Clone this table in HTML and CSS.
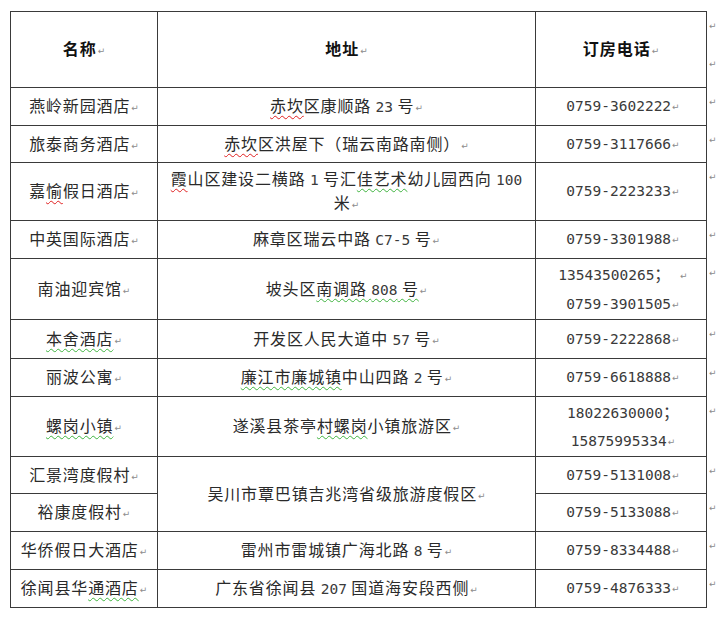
FILE: index.html
```html
<!DOCTYPE html>
<html lang="zh-CN">
<head>
<meta charset="utf-8">
<title>酒店订房电话</title>
<link rel="stylesheet" href="styles.css">
</head>
<body>
<table class="hotels">
  <colgroup>
    <col class="c-name">
    <col class="c-addr">
    <col class="c-tel">
    <col class="c-end">
  </colgroup>
  <tr class="h76 head">
    <th>名称<span class="pm">↵</span></th>
    <th>地址<span class="pm">↵</span></th>
    <th>订房电话<span class="pm">↵</span></th>
    <td class="end"><span class="em">↵</span><span class="em em2">↵</span></td>
  </tr>
  <tr class="h38">
    <td>燕岭新园酒店<span class="pm">↵</span></td>
    <td><span class="sp-red">赤坎</span>区康顺路 <span class="num">23</span> 号<span class="pm">↵</span></td>
    <td class="tel">0759-3602222<span class="pm">↵</span></td>
    <td class="end"><span class="em">↵</span></td>
  </tr>
  <tr class="h37">
    <td>旅泰商务酒店<span class="pm">↵</span></td>
    <td><span class="sp-red">赤坎</span>区洪屋下（瑞云南路南侧）<span class="pm">↵</span></td>
    <td class="tel">0759-3117666<span class="pm">↵</span></td>
    <td class="end"><span class="em">↵</span></td>
  </tr>
  <tr class="h58">
    <td>嘉<span class="sp-red">愉</span>假日酒店<span class="pm">↵</span></td>
    <td class="two32"><span class="sp-red">霞</span>山区建设二横路 <span class="num">1</span> 号汇<span class="sp-green">佳艺术</span>幼儿园西向 <span class="num">100</span><br>米<span class="pm">↵</span></td>
    <td class="tel">0759-2223233<span class="pm">↵</span></td>
    <td class="end"><span class="em">↵</span></td>
  </tr>
  <tr class="h38">
    <td>中英国际酒店<span class="pm">↵</span></td>
    <td>麻章区瑞云中路 <span class="num">C7-5</span> 号<span class="pm">↵</span></td>
    <td class="tel">0759-3301988<span class="pm">↵</span></td>
    <td class="end"><span class="em">↵</span></td>
  </tr>
  <tr class="h58">
    <td>南油迎宾馆<span class="pm">↵</span></td>
    <td>坡头区<span class="sp-green">南调路 <span class="num">808</span> 号</span><span class="pm">↵</span></td>
    <td class="tel two28">13543500265<span class="cjk">；</span> <span class="pm">↵</span><br>0759-3901505<span class="pm">↵</span></td>
    <td class="end"><span class="em">↵</span></td>
  </tr>
  <tr class="h39">
    <td><span class="sp-green">本舍酒店</span><span class="pm">↵</span></td>
    <td>开发区人民大道中 <span class="num">57</span> 号<span class="pm">↵</span></td>
    <td class="tel">0759-2222868<span class="pm">↵</span></td>
    <td class="end"><span class="em">↵</span></td>
  </tr>
  <tr class="h38">
    <td>丽波公寓<span class="pm">↵</span></td>
    <td><span class="sp-green">廉江市廉城镇</span>中山四路 <span class="num">2</span> 号<span class="pm">↵</span></td>
    <td class="tel">0759-6618888<span class="pm">↵</span></td>
    <td class="end"><span class="em">↵</span></td>
  </tr>
  <tr class="h59">
    <td><span class="sp-green">螺岗小镇</span><span class="pm">↵</span></td>
    <td>遂溪县茶亭<span class="sp-green">村螺岗</span>小镇旅游区<span class="pm">↵</span></td>
    <td class="tel two28">18022630000<span class="cjk">；</span><br>15875995334<span class="pm">↵</span></td>
    <td class="end"><span class="em">↵</span></td>
  </tr>
  <tr class="h37">
    <td>汇景湾度假村<span class="pm">↵</span></td>
    <td rowspan="2">吴川市覃巴镇吉兆湾省级旅游度假区<span class="pm">↵</span></td>
    <td class="tel">0759-5131008<span class="pm">↵</span></td>
    <td class="end"><span class="em">↵</span></td>
  </tr>
  <tr class="h38">
    <td>裕康度假村<span class="pm">↵</span></td>
    <td class="tel">0759-5133088<span class="pm">↵</span></td>
    <td class="end"><span class="em">↵</span></td>
  </tr>
  <tr class="h38">
    <td>华侨假日大酒店<span class="pm">↵</span></td>
    <td>雷州市雷城镇广海北路 <span class="num">8</span> 号<span class="pm">↵</span></td>
    <td class="tel">0759-8334488<span class="pm">↵</span></td>
    <td class="end"><span class="em">↵</span></td>
  </tr>
  <tr class="h38">
    <td>徐闻县华<span class="sp-green">通酒店</span><span class="pm">↵</span></td>
    <td>广东省徐闻县 <span class="num">207</span> 国道海安段西侧<span class="pm">↵</span></td>
    <td class="tel">0759-4876333<span class="pm">↵</span></td>
    <td class="end"><span class="em">↵</span></td>
  </tr>
</table>
</body>
</html>
```

FILE: styles.css
```css
html, body {
  margin: 0;
  padding: 0;
  background: #ffffff;
}

body {
  font-family: "Noto Sans CJK SC", "Noto Sans", sans-serif;
  font-size: 16px;
  color: #2a2a2a;
}

.hotels {
  border-collapse: collapse;
  table-layout: fixed;
  width: 711px;
  margin: 11px 0 0 10px;
}

.c-name { width: 147px; }
.c-addr { width: 378px; }
.c-tel  { width: 171px; }
.c-end  { width: 15px; }

.hotels th,
.hotels td {
  border: 1px solid #3a3a3a;
  padding: 0 4px;
  text-align: center;
  vertical-align: middle;
  letter-spacing: 0.85px;
  line-height: 22px;
  white-space: nowrap;
  overflow: visible;
}

.hotels th {
  font-weight: bold;
  color: #111;
  letter-spacing: 1px;
}

.h76 { height: 76px; }
.h59 { height: 59px; }
.h58 { height: 58px; }
.h39 { height: 39px; }
.h38 { height: 38px; }
.h37 { height: 37px; }

.hotels .num,
.hotels .tel {
  font-family: "DejaVu Sans Mono", "Noto Sans CJK SC", monospace;
  font-size: 14.5px;
  letter-spacing: 0;
  color: #3a3a3a;
}

.hotels .tel {
  padding-left: 8px;
}

.cjk {
  font-family: "Noto Sans CJK SC", sans-serif;
  font-size: 16px;
}

.two32 { line-height: 32px; padding-top: 4px; }
.hotels .two28 { line-height: 28px; }

.pm {
  font-family: "DejaVu Sans", sans-serif;
  font-size: 9px;
  font-weight: normal;
  color: #8c8c8c;
  letter-spacing: 0;
  margin-left: 1px;
  vertical-align: 1px;
}

.hotels td.end {
  border: none;
  padding: 9px 0 0 2px;
  vertical-align: top;
  text-align: left;
  line-height: 10px;
}

.em {
  display: block;
  font-family: "DejaVu Sans", sans-serif;
  font-size: 9px;
  color: #8c8c8c;
  letter-spacing: 0;
}

.em2 { margin-top: 28px; }

.sp-red {
  text-decoration: underline wavy #e02020;
  text-decoration-thickness: 1px;
  text-underline-offset: 3px;
}

.sp-green {
  text-decoration: underline wavy #3fb33f;
  text-decoration-thickness: 1px;
  text-underline-offset: 3px;
}
```
